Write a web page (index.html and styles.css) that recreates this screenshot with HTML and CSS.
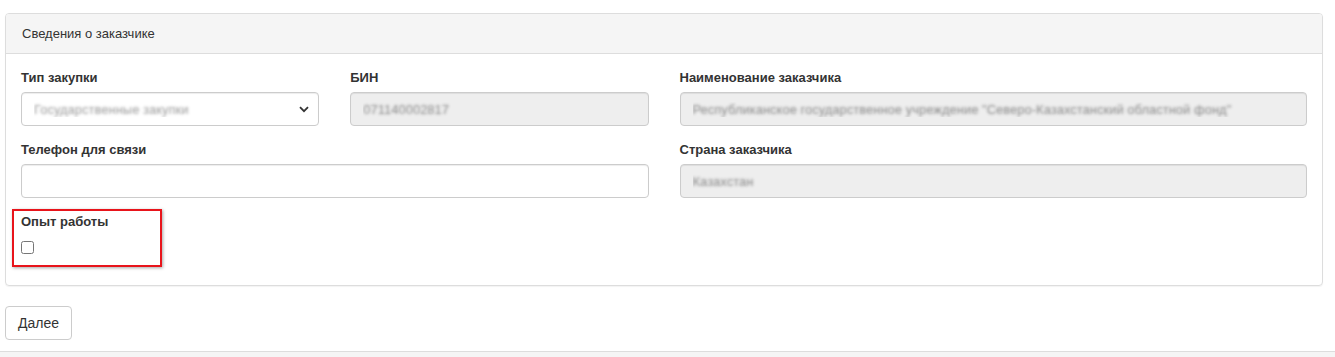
FILE: index.html
```html
<!DOCTYPE html>
<html lang="ru">
<head>
    <meta charset="UTF-8">
    <meta name="viewport" content="width=device-width, initial-scale=1.0">
    <title>Сведения о заказчике</title>
    <link rel="stylesheet" href="styles.css">
</head>
<body>
    <div class="page">
        <div class="panel">
            <div class="panel-heading">Сведения о заказчике</div>
            <div class="panel-body">
                <div class="form-row">
                    <div class="form-group col-3">
                        <label for="purchase-type">Тип закупки</label>
                        <div class="select-wrap">
                            <select id="purchase-type" class="form-control">
                                <option>Государственные закупки</option>
                            </select>
                            <svg class="select-arrow" width="10" height="7" viewBox="0 0 10 7"><path d="M1 1.2 5 5.2 9 1.2" fill="none" stroke="#333" stroke-width="1.8"/></svg>
                        </div>
                    </div>
                    <div class="form-group col-3">
                        <label for="bin">БИН</label>
                        <input type="text" id="bin" class="form-control blurred" value="071140002817" disabled>
                    </div>
                    <div class="form-group col-6">
                        <label for="customer-name">Наименование заказчика</label>
                        <input type="text" id="customer-name" class="form-control blurred" value="Республиканское государственное учреждение &quot;Северо-Казахстанский областной фонд&quot;" disabled>
                    </div>
                </div>
                <div class="form-row">
                    <div class="form-group col-6">
                        <label for="phone">Телефон для связи</label>
                        <input type="text" id="phone" class="form-control">
                    </div>
                    <div class="form-group col-6">
                        <label for="country">Страна заказчика</label>
                        <input type="text" id="country" class="form-control blurred" value="Казахстан" disabled>
                    </div>
                </div>
                <div class="form-row">
                    <div class="form-group col-3 marked">
                        <label for="experience">Опыт работы</label>
                        <input type="checkbox" id="experience" class="check">
                    </div>
                </div>
            </div>
        </div>

        <button class="btn">Далее</button>
    </div>
    <div class="footer"></div>
</body>
</html>
```

FILE: styles.css
```css
* {
    box-sizing: border-box;
    margin: 0;
    padding: 0;
}

body {
    font-family: "Liberation Sans", Arial, sans-serif;
    font-size: 14px;
    line-height: 1.42857;
    color: #333;
    background: #fff;
}

.page {
    padding: 13px 12px 0 5px;
}

.panel {
    border: 1px solid #ddd;
    border-radius: 4px;
    box-shadow: 0 1px 1px rgba(0,0,0,0.05);
}

.panel-heading {
    background: #f5f5f5;
    border-bottom: 1px solid #ddd;
    border-radius: 3px 3px 0 0;
    padding: 10px 16px;
    height: 40px;
    font-size: 13px;
    line-height: 19px;
}

.panel-body {
    padding: 15px 15px 16px;
}

.form-row {
    display: grid;
    grid-template-columns: repeat(4, 1fr);
    column-gap: 31px;
}

.col-3 { grid-column: span 1; }
.col-6 { grid-column: span 2; }

.form-group {
    margin-bottom: 15px;
}

label {
    display: block;
    font-size: 13px;
    font-weight: bold;
    line-height: 18px;
    margin-bottom: 5px;
}

.form-control {
    display: block;
    width: 100%;
    height: 34px;
    padding: 6px 12px;
    font-family: inherit;
    font-size: 13px;
    color: #555;
    background: #fff;
    border: 1px solid #ccc;
    border-radius: 4px;
    box-shadow: inset 0 1px 1px rgba(0,0,0,0.075);
}

.form-control:disabled {
    background: #eee;
    opacity: 1;
}

.form-control.blurred {
    color: transparent;
    text-shadow: 0 0 3px #888;
}

.select-wrap {
    position: relative;
}

select.form-control {
    appearance: none;
    -webkit-appearance: none;
    padding-left: 12px;
    color: transparent;
    text-shadow: 0 0 3px #999;
}

.select-arrow {
    position: absolute;
    right: 10px;
    top: 14px;
}

.check {
    display: block;
    width: 13px;
    height: 13px;
    margin-top: 10px;
}

.marked {
    position: relative;
}

.marked::after {
    content: "";
    position: absolute;
    top: -4px;
    left: -9px;
    width: 146px;
    height: 54px;
    border: 2px solid #e8141b;
    box-shadow: 1px 1px 3px rgba(0,0,0,0.35);
    pointer-events: none;
}

.btn {
    margin-top: 20px;
    height: 34px;
    padding: 6px 12px;
    font-family: inherit;
    font-size: 14px;
    color: #333;
    background: #fff;
    border: 1px solid #ccc;
    border-radius: 4px;
    cursor: pointer;
}

.footer {
    margin-top: 11px;
    height: 20px;
    background: #f5f5f5;
    border-top: 1px solid #ddd;
}
```
